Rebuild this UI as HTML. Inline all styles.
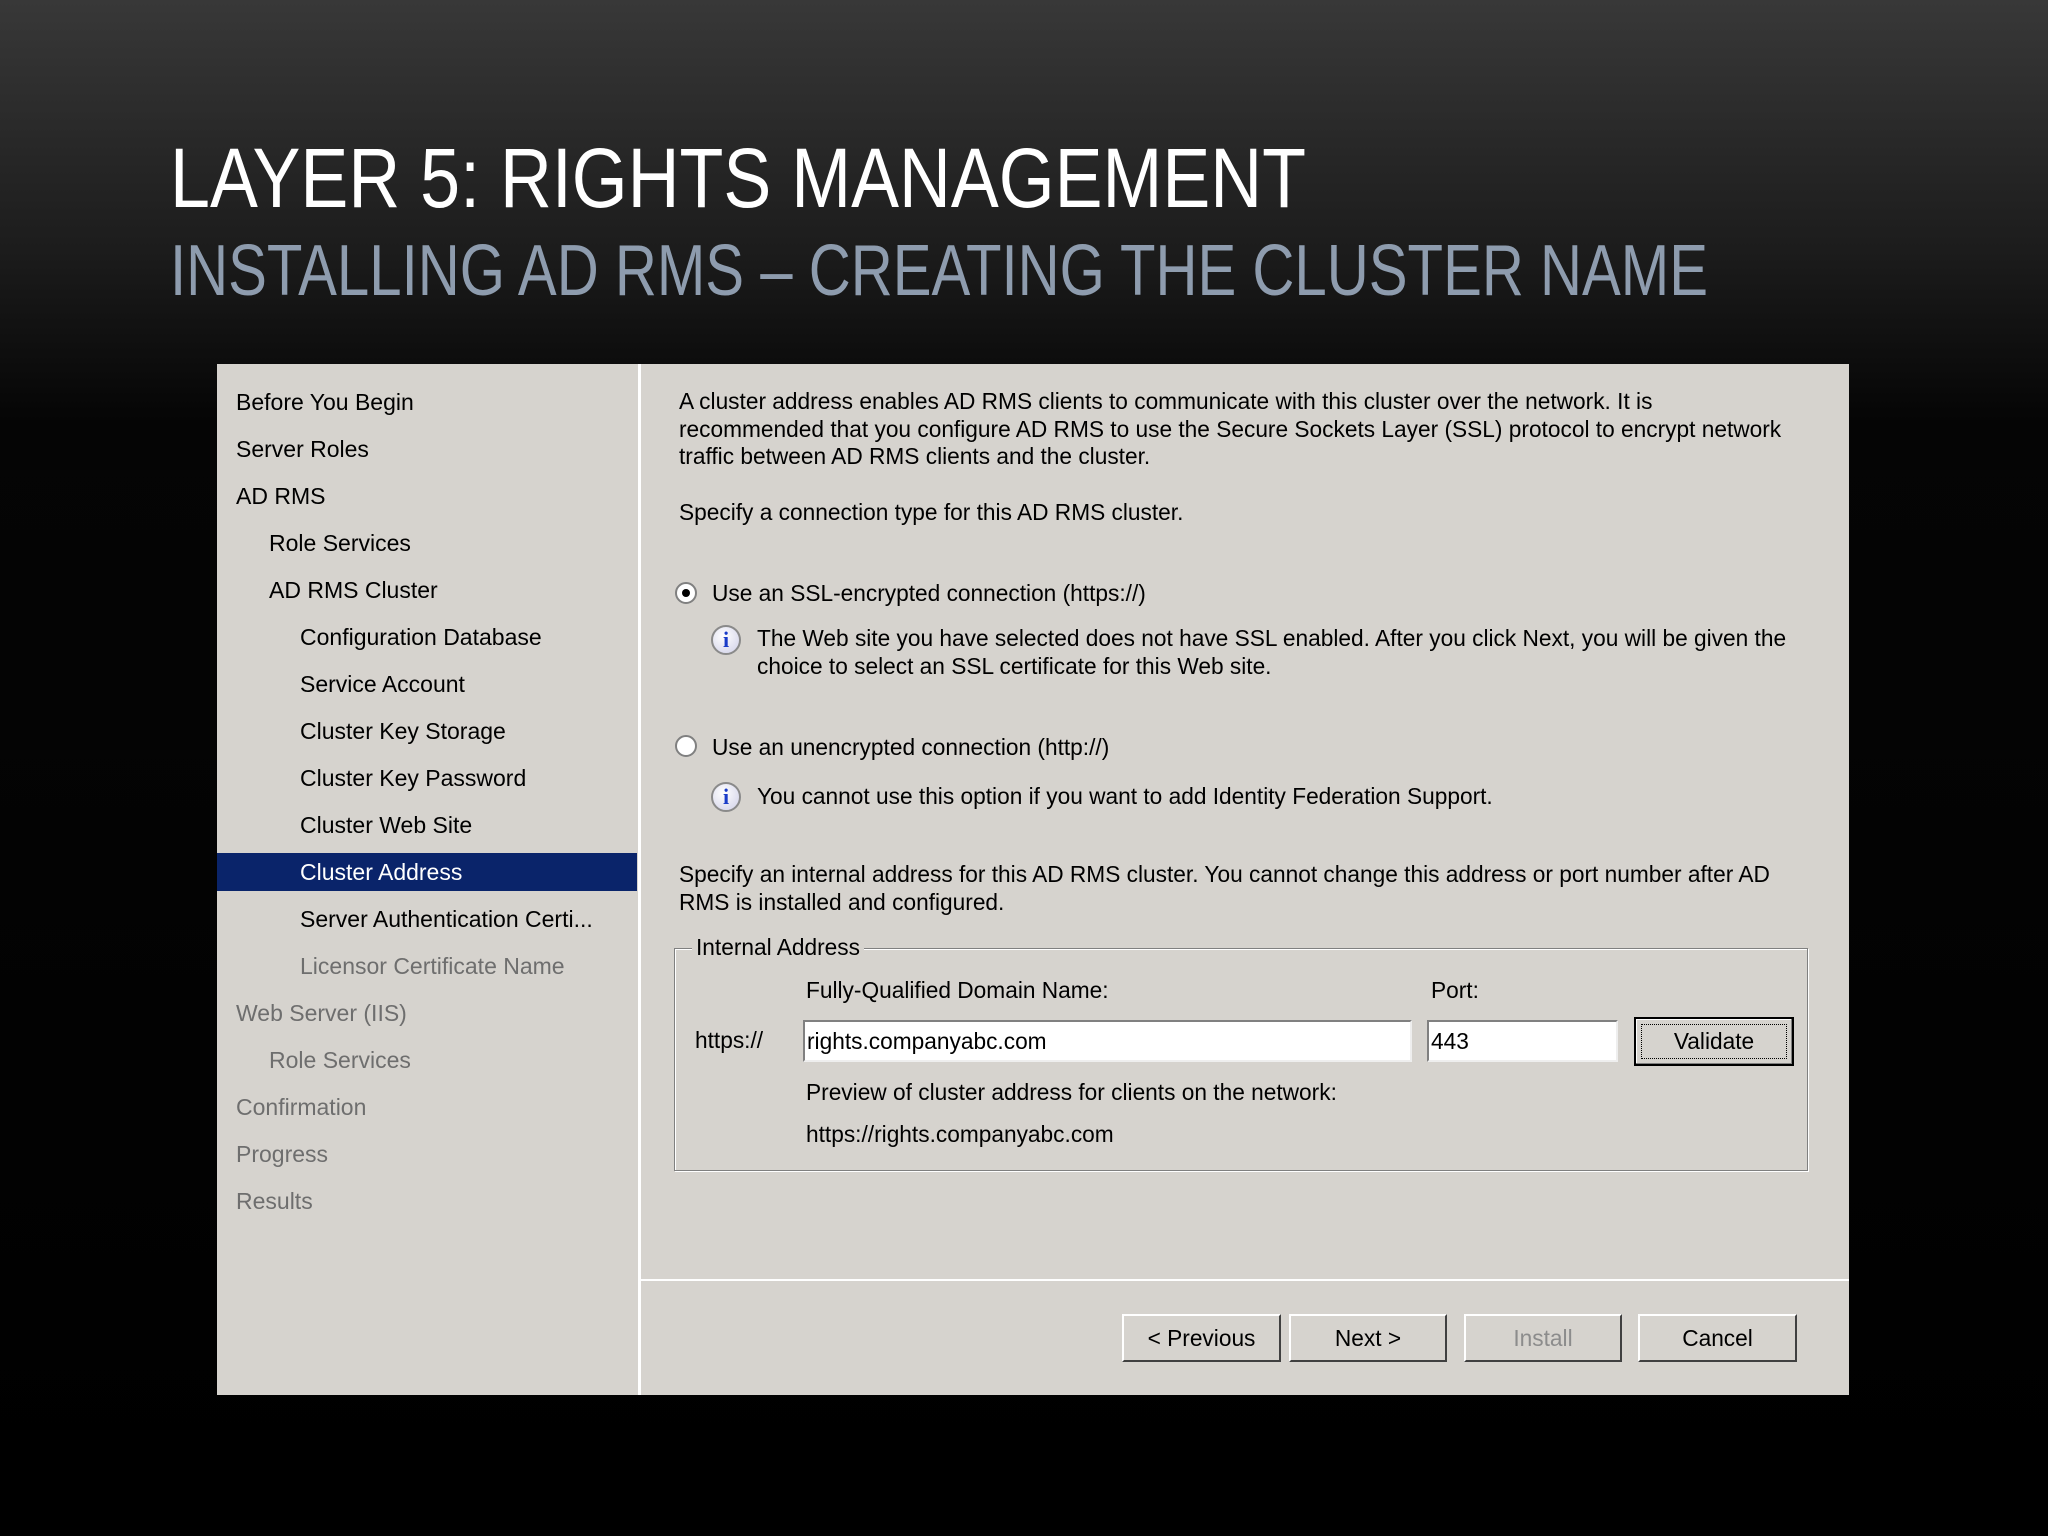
<!DOCTYPE html>
<html><head><meta charset="utf-8"><style>
*{margin:0;padding:0;box-sizing:border-box}
body{width:2048px;height:1536px;overflow:hidden;background:linear-gradient(#383838 0px,#1c1c1c 250px,#050505 420px,#000 100%);font-family:"Liberation Sans",sans-serif;position:relative}
.a{position:absolute;white-space:nowrap}
#panel{position:absolute;left:217px;top:364px;width:1632px;height:1031px;background:#d6d3ce}
.n{position:absolute;font-size:23px;color:#000;line-height:30px;white-space:nowrap}
.g{color:#6e6e6e}
.t{font-size:22.7px;color:#000;line-height:27.5px}
.inp{position:absolute;background:#fff;border-top:2px solid #808080;border-left:2px solid #808080;border-right:2px solid #eee;border-bottom:2px solid #eee;font-size:22.7px;line-height:38px;padding-left:2px}
.btn{position:absolute;background:#d6d3ce;border-top:2px solid #fff;border-left:2px solid #fff;border-right:2px solid #404040;border-bottom:2px solid #404040;font-size:22.7px;text-align:center;line-height:44px;height:48px}
.rad{position:absolute;width:22px;height:22px;border-radius:50%;background:#fff;border:2px solid #808080}
.info{position:absolute;width:30px;height:30px;border-radius:50%;border:2px solid #8a8a8a;background:radial-gradient(circle at 40% 35%,#fff,#dde 70%);text-align:center;color:#1a3cc8;font:bold 22px/26px "Liberation Serif",serif}
</style></head><body>
<svg class="a" style="left:0;top:0" width="2048" height="320">
<text x="170" y="207" font-family="Liberation Sans" font-size="84" fill="#fff" textLength="1136" lengthAdjust="spacingAndGlyphs">LAYER 5: RIGHTS MANAGEMENT</text>
<text x="170" y="295" font-family="Liberation Sans" font-size="72" fill="#8e9cae" textLength="1538" lengthAdjust="spacingAndGlyphs">INSTALLING AD RMS – CREATING THE CLUSTER NAME</text>
</svg>
<div id="panel">
<div class="a" style="left:0;top:489px;width:420px;height:38px;background:#0a246a"></div>
<div class="a" style="left:421px;top:0;width:3px;height:1031px;background:#fff"></div>
<div class="n" style="left:19px;top:23px">Before You Begin</div>
<div class="n" style="left:19px;top:70px">Server Roles</div>
<div class="n" style="left:19px;top:117px">AD RMS</div>
<div class="n" style="left:52px;top:164px">Role Services</div>
<div class="n" style="left:52px;top:211px">AD RMS Cluster</div>
<div class="n" style="left:83px;top:258px">Configuration Database</div>
<div class="n" style="left:83px;top:305px">Service Account</div>
<div class="n" style="left:83px;top:352px">Cluster Key Storage</div>
<div class="n" style="left:83px;top:399px">Cluster Key Password</div>
<div class="n" style="left:83px;top:446px">Cluster Web Site</div>
<div class="n" style="left:83px;top:493px;color:#fff">Cluster Address</div>
<div class="n" style="left:83px;top:540px">Server Authentication Certi...</div>
<div class="n g" style="left:83px;top:587px">Licensor Certificate Name</div>
<div class="n g" style="left:19px;top:634px">Web Server (IIS)</div>
<div class="n g" style="left:52px;top:681px">Role Services</div>
<div class="n g" style="left:19px;top:728px">Confirmation</div>
<div class="n g" style="left:19px;top:775px">Progress</div>
<div class="n g" style="left:19px;top:822px">Results</div>

<div class="a t" style="left:462px;top:24px">A cluster address enables AD RMS clients to communicate with this cluster over the network. It is<br>recommended that you configure AD RMS to use the Secure Sockets Layer (SSL) protocol to encrypt network<br>traffic between AD RMS clients and the cluster.</div>
<div class="a t" style="left:462px;top:135px">Specify a connection type for this AD RMS cluster.</div>
<div class="rad" style="left:458px;top:218px"><div style="position:absolute;left:5px;top:5px;width:8px;height:8px;border-radius:50%;background:#000"></div></div>
<div class="a t" style="left:495px;top:216px">Use an SSL-encrypted connection (https://)</div>
<div class="info" style="left:494px;top:261px">i</div>
<div class="a t" style="left:540px;top:261px">The Web site you have selected does not have SSL enabled. After you click Next, you will be given the<br>choice to select an SSL certificate for this Web site.</div>
<div class="rad" style="left:458px;top:371px"></div>
<div class="a t" style="left:495px;top:370px">Use an unencrypted connection (http://)</div>
<div class="info" style="left:494px;top:418px">i</div>
<div class="a t" style="left:540px;top:419px">You cannot use this option if you want to add Identity Federation Support.</div>
<div class="a t" style="left:462px;top:497px">Specify an internal address for this AD RMS cluster. You cannot change this address or port number after AD<br>RMS is installed and configured.</div>
<div class="a" style="left:457px;top:584px;width:1134px;height:223px;border:1px solid #808080;box-shadow:1px 1px 0 #fff,inset 1px 1px 0 #fff"></div>
<div class="a t" style="left:475px;top:570px;background:#d6d3ce;padding:0 4px">Internal Address</div>
<div class="a t" style="left:589px;top:613px">Fully-Qualified Domain Name:</div>
<div class="a t" style="left:1214px;top:613px">Port:</div>
<div class="a t" style="left:478px;top:663px">https://</div>
<div class="inp" style="left:586px;top:656px;width:609px;height:42px">rights.companyabc.com</div>
<div class="inp" style="left:1210px;top:656px;width:191px;height:42px">443</div>
<div class="btn" style="left:1417px;top:653px;width:160px;height:49px;border:2px solid #000;box-shadow:inset -1px -1px 0 #808080,inset 1px 1px 0 #fff"><div style="margin:5px;border:1px dotted #000;line-height:33px">Validate</div></div>
<div class="a t" style="left:589px;top:715px">Preview of cluster address for clients on the network:</div>
<div class="a t" style="left:589px;top:757px">https://rights.companyabc.com</div>
<div class="a" style="left:424px;top:915px;width:1208px;height:2px;background:#a0a0a0;border-bottom:2px solid #fff"></div>
<div class="btn" style="left:905px;top:950px;width:159px">&lt; Previous</div>
<div class="btn" style="left:1072px;top:950px;width:158px">Next &gt;</div>
<div class="btn" style="left:1247px;top:950px;width:158px;color:#8c8c8c">Install</div>
<div class="btn" style="left:1421px;top:950px;width:159px">Cancel</div>
</div>
</body></html>
